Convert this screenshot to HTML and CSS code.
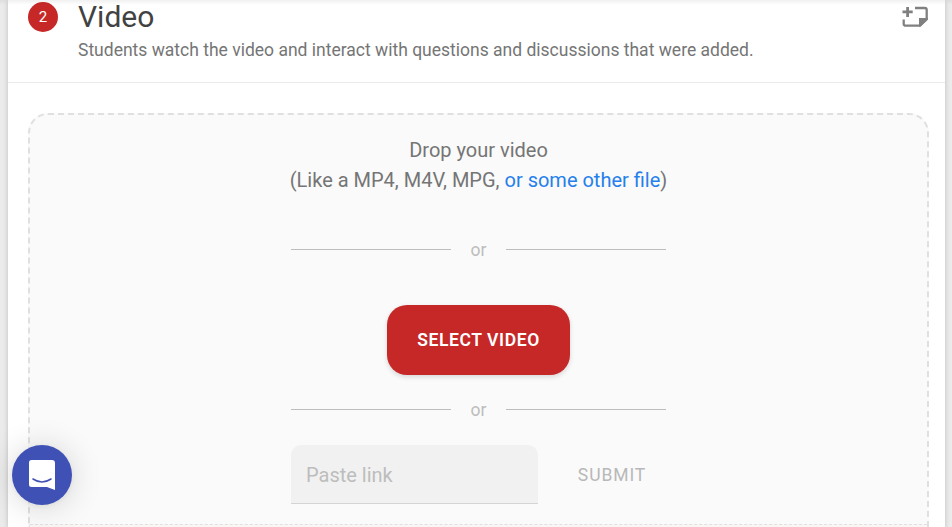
FILE: index.html
```html
<!DOCTYPE html>
<html lang="en">

<head>
    <meta charset="UTF-8">
    <meta name="viewport" content="width=device-width, initial-scale=1.0">
    <title>Video</title>

    <link rel="stylesheet" href="styles.css">
</head>

<body>
    <main class="card">
        <header class="card-header">
            <span class="step">2</span>
            <div class="heading">
                <h1>Video</h1>
                <p>Students watch the video and interact with questions and discussions that were added.</p>
            </div>
            <button class="note-btn" aria-label="Add note">
                <svg width="28" height="22" viewBox="0 0 28 22">
                    <path d="M6.600 .9v10M1.500 5.900h10.200" fill="none" stroke="#808080" stroke-width="2.800" />
                    <path d="M14 2h9.700a2 2 0 0 1 2 2V13l-7 6.700H4.500a1.800 1.800 0 0 1-1.800-1.800V13.500" fill="none" stroke="#808080" stroke-width="2.300" />
                    <path d="M18 12h8.800v1.700L19.500 20.800H18z" fill="#808080" />
                </svg>
            </button>
        </header>

        <section class="dropzone">
            <div class="drop-area">
                <p class="drop-text">Drop your video<br>(Like a MP4, M4V, MPG, <a href="#">or some other file</a>)</p>
                <div class="divider first">or</div>
                <button class="select-btn">SELECT VIDEO</button>
                <div class="divider">or</div>
                <form class="link-form">
                    <input type="text" placeholder="Paste link">
                    <button type="button" class="submit-btn" disabled>SUBMIT</button>
                </form>
            </div>
            <div class="drop-footer"></div>
        </section>
    </main>

    <button class="chat-btn" aria-label="Open chat">
        <svg width="28" height="32" viewBox="0 0 28 32">
            <path d="M3.500 1h20.500a3 3 0 0 1 3 3v27l-8-3H3.500a2.500 2.500 0 0 1-2.500-2.500V3.500a2.500 2.500 0 0 1 2.500-2.500z" fill="#fff" />
            <path d="M5 20q9 6 18 0" fill="none" stroke="#3f51b5" stroke-width="1.600" stroke-linecap="round" />
        </svg>
    </button>
</body>

</html>
```

FILE: styles.css
```css
* {
    margin: 0;
    padding: 0;
    box-sizing: border-box;
}

body {
    height: 527px;
    overflow: hidden;
    background: #ebebeb;
    font-family: Roboto, sans-serif;
    color: #757575;
}

body::before {
    content: '';
    position: absolute;
    top: 0;
    left: 0;
    right: 0;
    height: 5px;
    background: linear-gradient(rgba(0, 0, 0, 0.06), transparent);
}

button {
    border: none;
    background: none;
    font-family: inherit;
}

.card {
    width: 937px;
    height: 527px;
    margin-left: 8px;
    background: #fff;
    box-shadow: 0 1px 5px rgba(0, 0, 0, 0.2);
}

.card-header {
    display: flex;
    align-items: flex-start;
    height: 83px;
    padding: 0 16px 0 20px;
    border-bottom: 1px solid #ebebeb;
}

.step {
    width: 30px;
    height: 30px;
    margin-top: 2px;
    border-radius: 50%;
    background: #c62828;
    color: #fff;
    font-size: 15px;
    line-height: 30px;
    text-align: center;
}

.heading {
    flex: 1;
    margin-left: 20px;
}

.heading h1 {
    font-size: 30px;
    font-weight: 400;
    line-height: 34px;
    color: #424242;
}

.heading p {
    padding-top: 1px;
    font-size: 17.5px;
    line-height: 30px;
}

.note-btn {
    margin-top: 6px;
}

.note-btn svg,
.chat-btn svg {
    display: block;
}

.dropzone {
    display: flex;
    flex-direction: column;
    height: 414px;
    margin: 30px 16px 0 20px;
    border: 2px dashed #e0e0e0;
    border-bottom: none;
    border-radius: 20px 20px 0 0;
    background: #fafafa;
}

.drop-area {
    display: flex;
    flex-direction: column;
    align-items: center;
    padding: 20px 0;
}

.drop-text {
    font-size: 20px;
    line-height: 30px;
    text-align: center;
}

.drop-text a {
    color: #2680eb;
    text-decoration: none;
}

.divider {
    display: flex;
    align-items: center;
    justify-content: space-between;
    width: 375px;
    margin: 20px 0;
    font-size: 17.5px;
    line-height: 30px;
    color: #bdbdbd;
}

.divider.first {
    margin: 40px 0;
}

.divider::before,
.divider::after {
    content: '';
    width: 160px;
    height: 1px;
    margin-bottom: 2px;
    background: #bdbdbd;
}

.select-btn {
    width: 183px;
    height: 70px;
    border-radius: 20px;
    background: #c62828;
    box-shadow: 0 2px 5px rgba(0, 0, 0, 0.14);
    color: #fff;
    font-size: 17.5px;
    font-weight: 600;
    letter-spacing: 0.6px;
}

.link-form {
    display: flex;
    gap: 20px;
    width: 375px;
}

.link-form input {
    width: 247px;
    height: 59px;
    padding: 1px 15px 0;
    border: none;
    border-bottom: 1px solid #d4d4d4;
    border-radius: 10px 10px 0 0;
    background: #f1f1f1;
    font-family: inherit;
    font-size: 20px;
}

.link-form input::placeholder {
    color: #bdbdbd;
}

.submit-btn {
    flex: 1;
    color: #b8b8b8;
    font-size: 17.5px;
    font-weight: 400;
    letter-spacing: 0.9px;
}

.drop-footer {
    flex: 1;
    border-top: 1px dashed #e0e0e0;
    background: #faf6f6;
}

.chat-btn {
    position: fixed;
    left: 12px;
    bottom: 22px;
    display: flex;
    align-items: center;
    justify-content: center;
    width: 60px;
    height: 60px;
    border-radius: 50%;
    background: #3f51b5;
    box-shadow: 0 1px 6px rgba(0, 0, 0, 0.06), 0 2px 32px rgba(0, 0, 0, 0.16);
}
```
